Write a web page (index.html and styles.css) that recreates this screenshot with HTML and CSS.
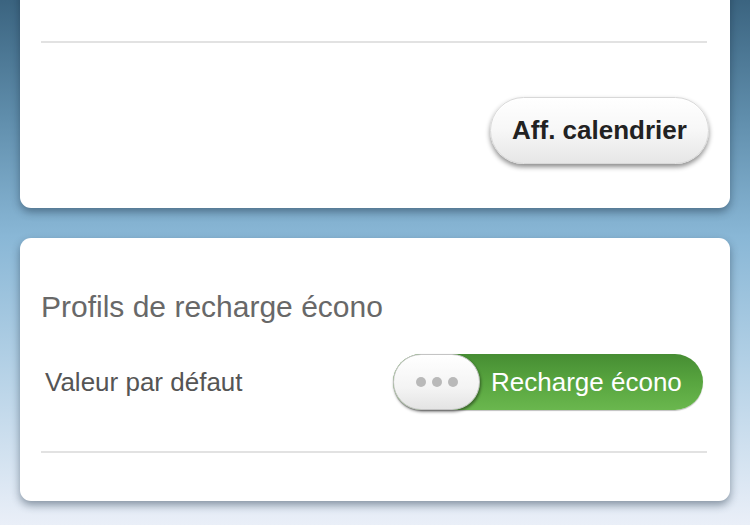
FILE: index.html
```html
<!DOCTYPE html>
<html lang="fr">
<head>
<meta charset="utf-8">
<link rel="stylesheet" href="styles.css">
</head>
<body>
<div class="page">
  <section class="card card-top">
    <div class="top-spacer"></div>
    <div class="divider"></div>
    <div class="button-row">
      <button class="pill-btn">Aff. calendrier</button>
    </div>
  </section>
  <section class="card card-profiles">
    <h2 class="title">Profils de recharge écono</h2>
    <div class="row">
      <span class="row-label">Valeur par défaut</span>
      <div class="toggle">
        <div class="knob"><span class="dot"></span><span class="dot"></span><span class="dot"></span></div>
        <span class="toggle-text">Recharge écono</span>
      </div>
    </div>
    <div class="divider divider-bottom"></div>
  </section>
</div>
</body>
</html>
```
FILE: styles.css
```css
html, body {
  margin: 0;
  padding: 0;
  height: 100%;
}
body {
  font-family: "Liberation Sans", Arial, sans-serif;
  background: linear-gradient(to bottom, #3b6480 0%, #5f8dab 22%, #89b7d6 45%, #b4d1e6 70%, #eaeff8 100%);
  overflow: hidden;
}
.page {
  display: flex;
  flex-direction: column;
  gap: 30px;
  padding: 0 20px;
}
.card {
  background: #fff;
  border-radius: 11px;
  box-shadow: 0 4px 8px rgba(20, 40, 60, 0.45);
}
.card-top {
  margin-top: -20px;
  padding: 0 23px 44px 21px;
  border-top-left-radius: 0;
  border-top-right-radius: 0;
}
.top-spacer {
  height: 61px;
}
.divider {
  height: 2px;
  background: #e2e2e2;
}
.button-row {
  display: flex;
  justify-content: flex-end;
  padding-top: 54px;
}
.pill-btn {
  font-family: "Liberation Sans", Arial, sans-serif;
  font-weight: bold;
  font-size: 26px;
  color: #222;
  height: 67px;
  width: 219px;
  border-radius: 34px;
  border: 1px solid #d8d8d8;
  background: linear-gradient(to bottom, #ffffff 0%, #f7f7f7 50%, #e6e6e6 100%);
  box-shadow: 0 3px 5px rgba(0, 0, 0, 0.45), inset 0 1px 0 #fff;
  margin-right: -2px;
  padding: 0;
}
.card-profiles {
  padding: 52px 23px 48px 21px;
}
.title {
  margin: 0;
  font-weight: normal;
  font-size: 30px;
  line-height: 34px;
  color: #686868;
}
.row {
  display: flex;
  justify-content: space-between;
  align-items: center;
  margin-top: 30px;
  padding-left: 4px;
}
.row-label {
  font-size: 26px;
  color: #555;
}
.toggle {
  display: flex;
  align-items: center;
  width: 310px;
  height: 56px;
  border-radius: 28px;
  background: linear-gradient(to bottom, #468d33 0%, #58a53f 50%, #6ab74e 100%);
  box-shadow: 0 1px 1px rgba(0, 0, 0, 0.25);
  margin-right: 4px;
}
.knob {
  width: 87px;
  height: 56px;
  box-sizing: border-box;
  border-radius: 28px;
  background: linear-gradient(to bottom, #ffffff 0%, #f4f4f4 60%, #e4e4e4 100%);
  border: 1px solid #c4c4c4;
  box-shadow: 1px 2px 3px rgba(0, 0, 0, 0.45);
  display: flex;
  justify-content: center;
  align-items: center;
  gap: 6px;
}
.dot {
  width: 10px;
  height: 10px;
  border-radius: 50%;
  background: #b9b9b9;
}
.toggle-text {
  color: #fff;
  font-size: 26px;
  margin-left: 11px;
}
.divider-bottom {
  margin-top: 41px;
}
```
